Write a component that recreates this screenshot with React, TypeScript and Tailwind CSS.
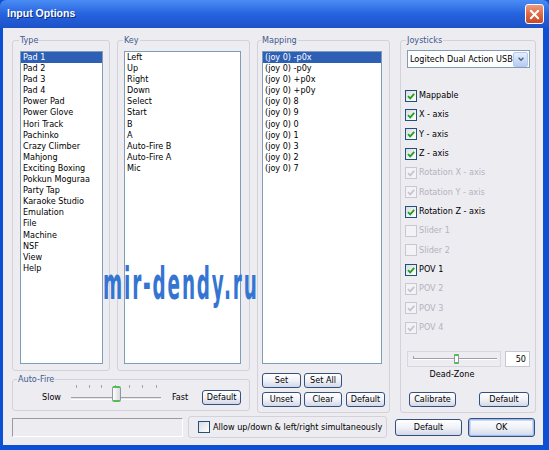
import React from "react";

const typeItems = ["Pad 1","Pad 2","Pad 3","Pad 4","Power Pad","Power Glove","Hori Track","Pachinko","Crazy Climber","Mahjong","Exciting Boxing","Pokkun Moguraa","Party Tap","Karaoke Studio","Emulation","File","Machine","NSF","View","Help"];
const keyItems = ["Left","Up","Right","Down","Select","Start","B","A","Auto-Fire B","Auto-Fire A","Mic"];
const mapItems = ["(joy 0) -p0x","(joy 0) -p0y","(joy 0) +p0x","(joy 0) +p0y","(joy 0) 8","(joy 0) 9","(joy 0) 0","(joy 0) 1","(joy 0) 3","(joy 0) 2","(joy 0) 7"];
const joyChecks: [string, boolean, boolean, boolean][] = [
  ["Mappable", true, false, false],
  ["X - axis", true, false, false],
  ["Y - axis", true, false, true],
  ["Z - axis", true, false, false],
  ["Rotation X - axis", true, true, false],
  ["Rotation Y - axis", true, true, true],
  ["Rotation Z - axis", true, false, false],
  ["Slider 1", false, true, false],
  ["Slider 2", false, true, true],
  ["POV 1", true, false, false],
  ["POV 2", true, true, false],
  ["POV 3", true, true, true],
  ["POV 4", true, true, false],
];

function Btn({ children, className = "" }: { children: React.ReactNode; className?: string }) {
  return (
    <div className={"flex items-center justify-center rounded-[3px] border border-[#34507c] bg-linear-to-b from-[#ffffff] via-[#f1f2f7] to-[#d3d8e8] leading-none text-black " + className}>
      {children}
    </div>
  );
}

function Check({ checked, disabled }: { checked: boolean; disabled: boolean }) {
  return (
    <span
      className={
        disabled
          ? "flex h-[12px] w-[12px] shrink-0 items-center justify-center border border-[#c9c8d2] bg-[#f3f3f6]"
          : "flex h-[12px] w-[12px] shrink-0 items-center justify-center border border-[#1c5180] bg-linear-to-br from-[#dcdce0] to-white"
      }
    >
      {checked && (
        <svg viewBox="0 0 10 10" className="h-[10px] w-[10px]">
          <path d="M2 5.2 L4.2 7.4 L8.2 2.8" stroke={disabled ? "#c6c5cf" : "#21a121"} strokeWidth="1.8" fill="none" />
        </svg>
      )}
    </span>
  );
}

function ListBox({ items, selected, className = "" }: { items: string[]; selected?: number; className?: string }) {
  return (
    <div className={"border border-[#7f9db9] bg-white overflow-hidden " + className}>
      {items.map((it, i) => (
        <div
          key={i}
          className={
            i === selected
              ? "h-[11.1px] whitespace-nowrap bg-[#2d5fb5] pl-[2px] leading-[11.1px] text-white"
              : "h-[11.1px] whitespace-nowrap pl-[2px] leading-[11.1px] text-black"
          }
        >
          {it}
        </div>
      ))}
    </div>
  );
}

function Legend({ children }: { children: React.ReactNode }) {
  return <legend className="ml-[-1px] px-[1px] leading-[11px] text-[#3f5a8e]">{children}</legend>;
}

function AutoSlider() {
  const ticks = [7, 20, 32, 46, 60, 73, 87];
  return (
    <div className="relative h-[24px] w-[94px]">
      {ticks.map((t) => (
        <div key={t} className="absolute top-0 h-[3px] w-px bg-[#a3a3ad]" style={{ left: t }} />
      ))}
      <div className="absolute left-[2px] right-[2px] top-[12px] h-[3px] border-t border-[#a0a0a8] border-b border-b-white bg-[#e4e4ea]" />
      <div className="absolute left-[43px] top-[1px] h-[16px] w-[9px] rounded-[2px] border-x border-x-[#8e98a4] border-y-2 border-y-[#4fbf4f] bg-linear-to-r from-white to-[#d9dade]" />
    </div>
  );
}

export default function App() {
  return (
    <div className="flex h-[450px] w-[549px] flex-col overflow-hidden bg-[#0b4fd3] font-['DejaVu_Sans_Condensed','DejaVu_Sans',sans-serif] text-[9px] text-black">
      {/* Title bar */}
      <div className="flex h-[28px] shrink-0 items-center rounded-t-[6px] bg-linear-to-b from-[#4a8cf4] via-[#2663de] to-[#1b52c9] pl-[7px] pr-[5px]">
        <span className="font-['Liberation_Sans',sans-serif] text-[10.5px] font-bold text-white [text-shadow:1px_1px_0_#0c2f85]">
          Input Options
        </span>
        <div className="ml-auto flex h-[20px] w-[19px] items-center justify-center rounded-[3px] border border-white bg-linear-to-b from-[#ec9a80] via-[#de6a47] to-[#c8482a]">
          <svg viewBox="0 0 12 12" className="h-[11px] w-[11px]">
            <path d="M2 2 L10 10 M10 2 L2 10" stroke="white" strokeWidth="2.2" strokeLinecap="round" />
          </svg>
        </div>
      </div>

      {/* Body */}
      <div className="relative flex flex-1 flex-col border-b-[5px] border-l-[3px] border-r-[6px] border-[#0c50d6] bg-[#edecf1] pl-[9px] pr-[7px] pt-[7px]">
        <div className="flex">
          {/* Left column */}
          <div className="flex w-[238px] flex-col">
            <div className="flex gap-[7px]">
              <fieldset className="w-[98px] rounded-[3px] border border-[#d3d2da] pb-[6px] pl-[7px] pr-[6px]">
                <Legend>Type</Legend>
                <ListBox items={typeItems} selected={0} className="mt-[5px] h-[313px] w-[83px]" />
              </fieldset>
              <fieldset className="w-[133px] rounded-[3px] border border-[#d3d2da] pb-[6px] pl-[6px] pr-[8px]">
                <Legend>Key</Legend>
                <ListBox items={keyItems} className="mt-[5px] h-[313px] w-[117px]" />
              </fieldset>
            </div>
            <fieldset className="mt-[3px] rounded-[3px] border border-[#d3d2da] pb-[1px] pl-[5px]">
              <Legend>Auto-Fire</Legend>
              <div className="flex h-[24px] items-center">
                <span className="ml-[24px] leading-none">Slow</span>
                <div className="ml-[8px]">
                  <AutoSlider />
                </div>
                <span className="ml-[9px] leading-none">Fast</span>
                <Btn className="ml-[14px] h-[15px] w-[39px]">Default</Btn>
              </div>
            </fieldset>
          </div>

          {/* Mapping */}
          <fieldset className="ml-[7px] w-[130px] rounded-[3px] border border-[#d3d2da] pb-[5px] pl-[4px] pr-[4px]">
            <Legend>Mapping</Legend>
            <ListBox items={mapItems} selected={0} className="mt-[5px] h-[313px] w-[120px]" />
            <div className="mt-[9px] flex gap-[3px]">
              <Btn className="h-[15px] w-[39px]">Set</Btn>
              <Btn className="h-[15px] w-[38px]">Set All</Btn>
            </div>
            <div className="mt-[4px] flex gap-[3px]">
              <Btn className="h-[15px] w-[39px]">Unset</Btn>
              <Btn className="h-[15px] w-[38px]">Clear</Btn>
              <Btn className="ml-[1px] h-[15px] w-[39px]">Default</Btn>
            </div>
          </fieldset>

          {/* Joysticks */}
          <fieldset className="ml-[10px] w-[139px] rounded-[3px] border border-[#d3d2da] pb-[5px] pl-[6px] pr-[2px]">
            <Legend>Joysticks</Legend>
            <div className="mt-[4px] flex h-[18px] w-[123px] items-center border border-[#7f9db9] bg-white">
              <span className="flex-1 whitespace-nowrap pl-[2px] leading-none">Logitech Dual Action USB</span>
              <div className="mr-px flex h-[15px] w-[15px] items-center justify-center rounded-[2px] border border-[#b8c8ec] bg-linear-to-b from-[#e6eefe] to-[#b9cbf2]">
                <svg viewBox="0 0 10 10" className="h-[8px] w-[8px]">
                  <path d="M2 3.5 L5 6.5 L8 3.5" stroke="#4d6185" strokeWidth="1.8" fill="none" />
                </svg>
              </div>
            </div>
            <div className="ml-[-2px] mt-[18px] flex flex-col">
              {joyChecks.map(([label, checked, disabled, tall]) => (
                <div key={label} className={tall ? "flex h-[20px] items-center gap-[2px]" : "flex h-[19px] items-center gap-[2px]"}>
                  <Check checked={checked} disabled={disabled} />
                  <span className={disabled ? "whitespace-nowrap leading-[11px] text-[#b4b3be]" : "whitespace-nowrap leading-[11px] text-black"}>
                    {label}
                  </span>
                </div>
              ))}
            </div>
            <div className="mt-[14px] flex h-[16px] items-center gap-[4px]">
              <div className="relative h-[16px] w-[94px] border border-[#d8d7df]">
                <div className="absolute left-[5px] top-[4px] h-[3px] w-px bg-[#a3a3ad]" />
                <div className="absolute left-[5px] right-[3px] top-[6px] h-[2px] border-t border-[#a0a0a8] border-b border-b-white" />
                <div className="absolute left-[46px] top-[2px] h-[10px] w-[5px] rounded-[1px] border-x border-x-[#8e98a4] border-y-2 border-y-[#4fbf4f] bg-white" />
              </div>
              <div className="flex h-[16px] w-[25px] items-center justify-end border border-[#c5c9d6] bg-white pr-[3px] leading-none">
                50
              </div>
            </div>
            <div className="mt-[2px] h-[11px] w-[90px] text-center leading-[11px]">Dead-Zone</div>
            <div className="mt-[12px] flex">
              <Btn className="ml-[2px] h-[15px] w-[47px]">Calibrate</Btn>
              <Btn className="ml-[23px] h-[15px] w-[50px]">Default</Btn>
            </div>
          </fieldset>
        </div>

        {/* Bottom row */}
        <div className="mt-[3px] flex h-[22px] items-center">
          <div className="h-[19px] w-[171px] border border-b-white border-l-[#9a9aa2] border-r-white border-t-[#9a9aa2]" />
          <div className="ml-[5px] flex h-[22px] w-[199px] items-center rounded-[3px] border border-[#d3d2da] pl-[9px]">
            <Check checked={false} disabled={false} />
            <span className="ml-[3px] whitespace-nowrap leading-none">Allow up/down &amp; left/right simultaneously</span>
          </div>
          <Btn className="ml-[8px] h-[17px] w-[67px]">Default</Btn>
          <Btn className="ml-[6px] h-[19px] w-[67px] shadow-[inset_0_0_0_1px_#9dbbf0,inset_0_0_0_2px_#c9d9f7]">OK</Btn>
        </div>

        {/* Watermark */}
        <div className="pointer-events-none absolute left-[100px] top-[234px] origin-top-left scale-x-[0.46] scale-y-[1.1] whitespace-nowrap font-['DejaVu_Sans',sans-serif] text-[40px] font-bold leading-[40px] tracking-[4px] text-[#3575d2]">
          mir-dendy.ru
        </div>
      </div>
    </div>
  );
}
